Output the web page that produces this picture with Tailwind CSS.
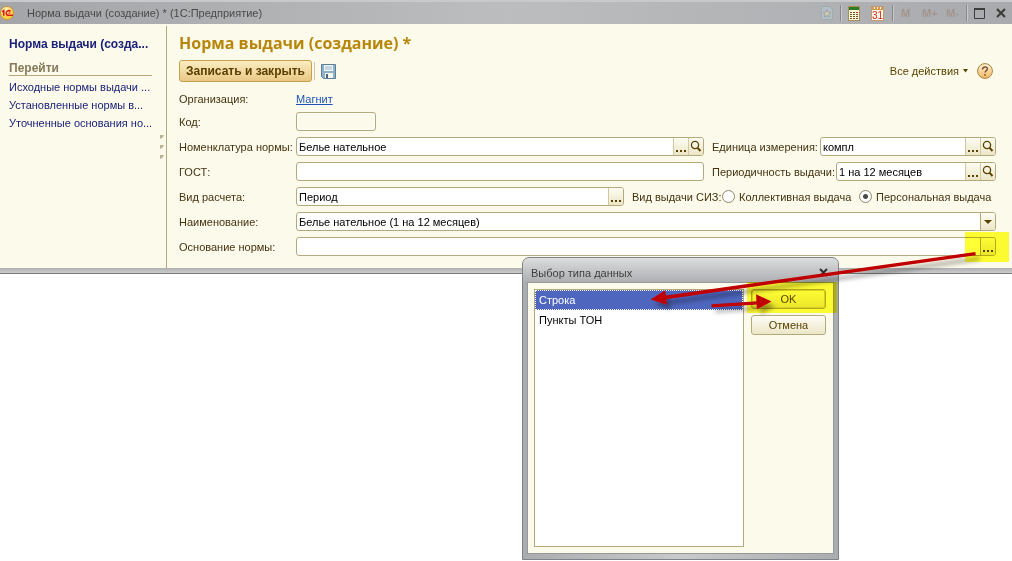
<!DOCTYPE html>
<html lang="ru">
<head>
<meta charset="utf-8">
<meta name="viewport" content="width=device-width, initial-scale=1">
<title>Норма выдачи (создание) * (1С:Предприятие)</title>
<script src="https://cdn.jsdelivr.net/npm/@tailwindcss/browser@4"></script>
</head>
<body class="relative min-h-screen overflow-hidden bg-white font-['Liberation_Sans',Arial,sans-serif] text-[11px] leading-4 text-[#443311]">

<svg class="hidden" aria-hidden="true">
  <symbol id="dots" viewBox="0 0 14 17"><path fill="#5a4300" d="M2 12h2v2H2zM6 12h2v2H6zM10 12h2v2h-2z"/></symbol>
  <symbol id="lens" viewBox="0 0 14 17"><circle cx="6" cy="7" r="3.6" fill="none" stroke="#5a4300" stroke-width="1.3"/><path d="M8.6 9.8 11.5 13" stroke="#5a4300" stroke-width="2"/></symbol>
</svg>

<div class="border-b border-[#7d7d80]">
  <header class="flex h-6 items-center border-t-2 border-[#c8c9cb] bg-gradient-to-r from-[#a3a5a8] via-[#bbbdbf] to-[#a8aaad]">
    <svg class="size-4 shrink-0" viewBox="0 0 16 16" aria-hidden="true">
      <defs><radialGradient id="g1" cx=".4" cy=".3"><stop offset="0" stop-color="#fffbd0"/><stop offset="1" stop-color="#ffcf3f"/></radialGradient></defs>
      <circle cx="7" cy="8" r="6.6" fill="url(#g1)" stroke="#c98a35" stroke-width=".8"/>
      <path d="M2 6.800 3.800 5.600v5.200M10.500 6.400C9.500 5.200 6.200 5.300 6.200 7.900c0 1.800 1.400 2.300 2.600 2.300H13" fill="none" stroke="#d8201a" stroke-width="1.600"/><path d="M8.300 8h2" stroke="#d8201a"/>
    </svg>
    <div class="ml-[11px] flex-1 whitespace-pre text-[#4a4a4a]">Норма выдачи (создание) * (1С:Предприятие)</div>
    <div class="flex h-full items-center">
      <button class="mr-[7px]" aria-label="Избранное"><svg class="h-[14px] w-3" viewBox="0 0 12 14"><path d="M.5.5h8l3 3v10H.5z" fill="#b4bfc6" stroke="#9eabb5"/><path d="m6 3.500 1.200 2.500 2.800.3-2 1.900.5 2.800L6 9.700 3.500 11 4 8.200 2 6.300 4.800 6z" fill="#cdc5ad" stroke="#8f9aa2" stroke-width=".7"/></svg></button>
      <span class="mr-[6px] h-4 w-0.5 border-l border-[#85878a] bg-[#c8cacc]"></span>
      <button class="mr-[11px]" aria-label="Калькулятор"><svg class="h-[15px] w-3" viewBox="0 0 12 15"><rect x=".5" y=".5" width="11" height="14" fill="#fff8d8" stroke="#a98d5a"/><path fill="#2e7d22" d="M1 1h10v3H1z"/><path fill="#6b5427" d="M2 6h2v1H2zM5 6h2v1H5zM2 8h2v1H2zM5 8h2v1H5zM8 8h2v1H8zM2 10h2v1H2zM5 10h2v1H5zM8 10h2v1H8zM2 12h2v1H2zM5 12h2v1H5zM8 12h2v1H8z"/><path fill="#d22" d="M8 6h2v1H8z"/></svg></button>
      <button class="mr-[8px]" aria-label="Календарь"><svg class="h-[15px] w-[13px]" viewBox="0 0 13 15"><rect x=".5" y=".5" width="12" height="14" fill="#fff8e8" stroke="#c49a73"/><path fill="#d79a4c" d="M1 1h11v3H1z"/><path fill="#fff" d="M3 1h1v2H3zM6 1h1v2H6zM9 1h1v2H9z"/><text x="6.500" y="13" text-anchor="middle" font-size="10" font-family="Liberation Sans" fill="#d5281c">31</text></svg></button>
      <span class="mr-[7px] h-4 w-0.5 border-l border-[#85878a] bg-[#c8cacc]"></span>
      <button class="w-[21px] text-left font-bold text-[#a1958d]" disabled>M</button>
      <button class="w-6 text-left font-bold text-[#a1958d]" disabled>M+</button>
      <button class="w-5 text-left font-bold text-[#a1958d]" disabled>M-</button>
      <span class="mr-[6px] h-4 w-0.5 border-l border-[#85878a] bg-[#c8cacc]"></span>
      <button class="mr-[11px]" aria-label="Развернуть"><svg class="h-[11px] w-[11px]" viewBox="0 0 11 11"><path d="M.5 1v9.500h10V1" fill="none" stroke="#3d3d3d"/><path d="M0 1h11" stroke="#3d3d3d" stroke-width="2"/></svg></button>
      <button class="mr-[6px]" aria-label="Закрыть"><svg class="size-[10px]" viewBox="0 0 10 10"><path d="m1 1 8 8M9 1 1 9" stroke="#3d3d3d" stroke-width="2.200"/></svg></button>
    </div>
  </header>

  <div class="flex bg-[#fcfaeb]">
    <nav class="relative mt-0.5 w-[167px] shrink-0 border-r border-[#b3a97b] pl-[9px] pr-[14px] pt-[10px] whitespace-nowrap text-[#1b2279]">
      <div class="text-[12px] leading-4 font-bold">Норма выдачи (созда...</div>
      <div class="mt-[9px] border-b border-[#b3a97b] text-[12px] leading-[14px] font-bold text-[#85795a]">Перейти</div>
      <ul class="mt-0.5 leading-[18px]">
        <li><a href="#">Исходные нормы выдачи ...</a></li>
        <li><a href="#">Установленные нормы в...</a></li>
        <li><a href="#">Уточненные основания но...</a></li>
      </ul>
      <svg class="absolute right-[2px] top-[109px] h-6 w-1" viewBox="0 0 4 24" aria-hidden="true"><path d="M0 0h4L3 2 2 3 0 4zM0 10h4l-1 2-1 1-2 1zM0 20h4l-1 2-1 1-2 1z" fill="#b9b294"/></svg>
    </nav>

    <main class="min-w-0 flex-1 pb-3 pl-3 pr-4 pt-[9px]">
      <h1 class="font-['Open_Sans',sans-serif] text-[16px] leading-5 font-bold text-[#b8860b]">Норма выдачи (создание) *</h1>
      <div class="mt-[7px] flex h-[22px] items-center">
        <button class="h-[22px] w-[133px] rounded-[3px] border border-[#c6a04e] bg-gradient-to-b from-[#fbedc0] to-[#e9c886] text-[12px] leading-4 font-bold whitespace-nowrap text-[#5a3f00]">Записать и закрыть</button>
        <span class="ml-0.5 h-[18px] w-px bg-[#cfc8a8]"></span>
        <button class="ml-[6px]" aria-label="Записать"><svg class="size-[15px]" viewBox="0 0 15 15"><path d="M.5.5h14v14h-12l-2-2z" fill="#8fb0c6" stroke="#5b7f98"/><path fill="#eef5f8" d="M3 1h9v6H3z"/><path d="M4 3h7M4 5h7" stroke="#9fbccb"/><path fill="#f5f5f0" d="M4 9h8v5H4z"/><path fill="#45657b" d="M5 10h2v4H5z"/></svg></button>
        <button class="ml-auto flex items-center gap-1 whitespace-nowrap text-[#5a4300]">Все действия <svg class="h-1 w-[5px]" viewBox="0 0 5 4"><path fill="#5a4300" d="M0 0h5L2.500 3.500z"/></svg></button>
        <button class="ml-[9px] mr-[3px]" aria-label="Справка"><svg class="size-4" viewBox="0 0 16 16"><defs><linearGradient id="g2" x2="0" y2="1"><stop stop-color="#fff3d6"/><stop offset="1" stop-color="#f5b760"/></linearGradient></defs><circle cx="8" cy="8" r="7.400" fill="url(#g2)" stroke="#a8813f"/><path d="M5.600 6.400c0-3.200 4.800-3.200 4.800-.5 0 1.700-2.300 1.700-2.300 3.600M8 11v1.700" fill="none" stroke="#7a5640" stroke-width="1.500"/></svg></button>
      </div>

      <form class="mt-2 [&_input]:outline-none">
        <div class="flex h-[18px] items-center"><span class="w-[117px] shrink-0">Организация:</span><a href="#" class="text-[#1d52b8] underline">Магнит</a></div>
        <div class="mt-1 flex h-[19px] items-center"><label for="code" class="w-[117px] shrink-0">Код:</label><input id="code" class="h-[19px] w-20 rounded-[3px] border border-[#b3a97b] bg-[#fcfaeb] px-0.5 inset-ring inset-ring-white"></div>

        <div class="mt-[6px] flex h-[19px] items-center">
          <label for="nom" class="w-[117px] shrink-0 whitespace-nowrap">Номенклатура нормы:</label>
          <div class="flex h-[19px] min-w-0 flex-1 overflow-hidden rounded-[3px] border border-[#b3a97b] bg-white"><input id="nom" value="Белье нательное" class="min-w-0 flex-1 px-0.5 text-black"><button type="button" aria-label="Выбрать" class="w-[15px] border-l border-[#d0c8a0] bg-gradient-to-b from-[#fdfcf2] to-[#ece6c8]"><svg class="h-[17px] w-[14px]"><use href="#dots"/></svg></button><button type="button" aria-label="Открыть" class="w-[15px] border-l border-[#d0c8a0] bg-gradient-to-b from-[#fdfcf2] to-[#ece6c8]"><svg class="h-[17px] w-[14px]"><use href="#lens"/></svg></button></div>
          <div class="ml-2 flex w-[284px] shrink-0 items-center">
            <label for="unit" class="w-[108px] shrink-0 whitespace-nowrap">Единица измерения:</label>
            <div class="flex h-[19px] min-w-0 flex-1 overflow-hidden rounded-[3px] border border-[#b3a97b] bg-white"><input id="unit" value="компл" class="min-w-0 flex-1 px-0.5 text-black"><button type="button" aria-label="Выбрать" class="w-[15px] border-l border-[#d0c8a0] bg-gradient-to-b from-[#fdfcf2] to-[#ece6c8]"><svg class="h-[17px] w-[14px]"><use href="#dots"/></svg></button><button type="button" aria-label="Открыть" class="w-[15px] border-l border-[#d0c8a0] bg-gradient-to-b from-[#fdfcf2] to-[#ece6c8]"><svg class="h-[17px] w-[14px]"><use href="#lens"/></svg></button></div>
          </div>
        </div>

        <div class="mt-[6px] flex h-[19px] items-center">
          <label for="gost" class="w-[117px] shrink-0">ГОСТ:</label>
          <input id="gost" class="h-[19px] min-w-0 flex-1 rounded-[3px] border border-[#b3a97b] bg-white px-0.5 text-black">
          <div class="ml-2 flex w-[284px] shrink-0 items-center">
            <label for="per" class="w-[124px] shrink-0 whitespace-nowrap">Периодичность выдачи:</label>
            <div class="flex h-[19px] min-w-0 flex-1 overflow-hidden rounded-[3px] border border-[#b3a97b] bg-white"><input id="per" value="1 на 12 месяцев" class="min-w-0 flex-1 px-0.5 text-black"><button type="button" aria-label="Выбрать" class="w-[15px] border-l border-[#d0c8a0] bg-gradient-to-b from-[#fdfcf2] to-[#ece6c8]"><svg class="h-[17px] w-[14px]"><use href="#dots"/></svg></button><button type="button" aria-label="Открыть" class="w-[15px] border-l border-[#d0c8a0] bg-gradient-to-b from-[#fdfcf2] to-[#ece6c8]"><svg class="h-[17px] w-[14px]"><use href="#lens"/></svg></button></div>
          </div>
        </div>

        <div class="mt-[6px] flex h-[19px] items-center">
          <label for="calc" class="w-[117px] shrink-0">Вид расчета:</label>
          <div class="flex h-[19px] min-w-0 flex-1 overflow-hidden rounded-[3px] border border-[#b3a97b] bg-white"><input id="calc" value="Период" class="min-w-0 flex-1 px-0.5 text-black"><button type="button" aria-label="Выбрать" class="w-[15px] border-l border-[#d0c8a0] bg-gradient-to-b from-[#fdfcf2] to-[#ece6c8]"><svg class="h-[17px] w-[14px]"><use href="#dots"/></svg></button></div>
          <div role="radiogroup" aria-labelledby="siz" class="ml-2 flex w-[364px] shrink-0 items-center whitespace-nowrap">
            <span id="siz" class="w-[90px]">Вид выдачи СИЗ:</span>
            <label class="flex w-[137px] items-center gap-1"><input type="radio" name="siz" class="size-[13px] appearance-none rounded-full border border-[#8f8768] bg-white checked:bg-[radial-gradient(circle,#4a4a4a_2px,#fff_3px)]">Коллективная выдача</label>
            <label class="flex items-center gap-1"><input type="radio" name="siz" checked class="size-[13px] appearance-none rounded-full border border-[#8f8768] bg-white checked:bg-[radial-gradient(circle,#4a4a4a_2px,#fff_3px)]">Персональная выдача</label>
          </div>
        </div>

        <div class="mt-[6px] flex h-[19px] items-center">
          <label for="name" class="w-[117px] shrink-0">Наименование:</label>
          <div class="flex h-[19px] min-w-0 flex-1 overflow-hidden rounded-[3px] border border-[#b3a97b] bg-white"><input id="name" value="Белье нательное (1 на 12 месяцев)" class="min-w-0 flex-1 px-0.5 text-black"><button type="button" aria-label="Раскрыть список" class="flex w-[15px] items-center justify-center border-l border-[#b3a97b] bg-gradient-to-b from-[#fdfcf2] to-[#ece6c8]"><svg class="h-1 w-2" viewBox="0 0 8 4"><path fill="#5a4300" d="M0 0h8L4 4z"/></svg></button></div>
        </div>

        <div class="mt-[6px] flex h-[19px] items-center">
          <label for="base" class="w-[117px] shrink-0">Основание нормы:</label>
          <div class="flex h-[19px] min-w-0 flex-1 overflow-hidden rounded-[3px] border border-[#b3a97b] bg-white"><input id="base" class="min-w-0 flex-1 px-0.5 text-black"><button type="button" aria-label="Выбрать" class="w-[15px] border-l border-[#b3a97b] bg-gradient-to-b from-[#fdfcf2] to-[#ece6c8]"><svg class="h-[17px] w-[14px]"><use href="#dots"/></svg></button></div>
        </div>
      </form>
    </main>
  </div>
  <div class="h-[5px] bg-gradient-to-b from-[#aeb0b2] to-[#cbccce]"></div>
</div>

<section role="dialog" aria-labelledby="dlg" class="absolute left-[522px] top-[257px] flex h-[303px] w-[317px] flex-col rounded-t-[7px] border border-[#808285] bg-gradient-to-r from-[#aaacaf] via-[#c8c9cb] to-[#aaacaf] px-1 pb-[5px]">
  <div class="-mx-1 flex h-6 shrink-0 items-center rounded-t-[6px] border-t border-[#dedfe0] bg-gradient-to-b from-[#dadbdc] to-[#adafb2] pl-2 pr-[10px] pt-1">
    <h2 id="dlg" class="flex-1 text-[#3f3f3f]">Выбор типа данных</h2>
    <button aria-label="Закрыть окно"><svg class="size-[9px]" viewBox="0 0 9 9"><path d="m1 1 7 7M8 1 1 8" stroke="#2f2f2f" stroke-width="2"/></svg></button>
  </div>
  <div class="flex min-h-0 flex-1 gap-[7px] border border-[#96989b] bg-[#fcfaeb] py-[6px] pl-[6px] pr-[7px]">
    <ul role="listbox" aria-labelledby="dlg" class="min-w-0 flex-1 border border-[#b3a97b] bg-white leading-5 text-black">
      <li role="option" aria-selected="true" class="border border-dotted border-white bg-[#4f66bf] pl-[3px] leading-[18px] text-white">Строка</li>
      <li role="option" aria-selected="false" class="pl-1">Пункты ТОН</li>
    </ul>
    <div class="flex w-[75px] flex-col gap-[6px]">
      <button class="h-5 rounded-[3px] border border-[#b3a97b] bg-gradient-to-b from-[#fefdf6] to-[#ece6c8] text-[#5a4300] inset-ring inset-ring-[#d8cfa4]">OK</button>
      <button class="h-5 rounded-[3px] border border-[#b3a97b] bg-gradient-to-b from-[#fefdf6] to-[#ece6c8] text-[#5a4300]">Отмена</button>
    </div>
  </div>
</section>

<div class="pointer-events-none absolute left-[965px] top-[232px] h-[30px] w-11 bg-[#ffff35] mix-blend-multiply"></div>
<div class="pointer-events-none absolute left-[747px] top-[282px] h-[31px] w-[90px] bg-[#ffff35] mix-blend-multiply"></div>
<svg class="pointer-events-none absolute left-[640px] top-[240px] h-20 w-[350px]" viewBox="640 240 350 80" aria-hidden="true">
  <defs><filter id="sh" x="-10%" y="-30%" width="120%" height="180%"><feDropShadow dx="4" dy="5" stdDeviation="2" flood-color="#000" flood-opacity=".35"/></filter></defs>
  <g filter="url(#sh)" fill="#c00000">
    <path d="M975.300 252 664 295.800l.4 3.600 311.400-44.200z"/><path d="m650.500 299.500 14.700-9.200 1.800 14.500z"/>
    <path d="m711.500 304.200 46-3 .2 3.300-46 3z"/><path d="m771.500 301.500-15.500-7.200.9 15z"/>
  </g>
</svg>
</body>
</html>
